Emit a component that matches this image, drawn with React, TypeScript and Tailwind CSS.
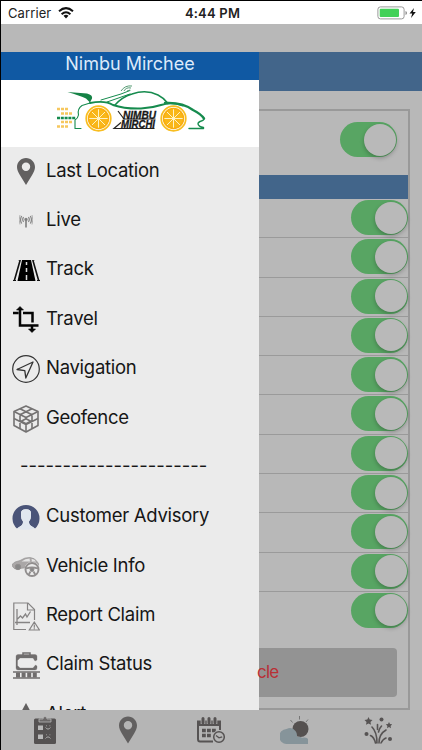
import React from "react";

type IconProps = { className?: string };

const PinIcon: React.FC<IconProps> = ({ className }) => (
	<svg viewBox="0 0 18 27" className={className} fill="#626060">
		<path
			fillRule="evenodd"
			d="M9 0C4 0 0 4 0 9c0 3 1.200 5 3 8.200L9 27l6-9.800c1.800-3.200 3-5.200 3-8.200 0-5-4-9-9-9Zm0 4.500a4.200 4.200 0 1 1 0 8.400 4.200 4.200 0 0 1 0-8.400Z"
		/>
	</svg>
);

const LiveIcon = () => (
	<svg viewBox="0 0 14 13" className="w-[14px] h-[13px]" fill="none" stroke="#858585" strokeWidth="1.2">
		<path d="M4.600 2.200q-1.800 2.300 0 4.600M9.400 2.200q1.800 2.300 0 4.600M2.700 1q-2.300 4 0 7.500M11.300 1q2.300 4 0 7.500" />
		<path d="M1 0q-1.600 5 0 9.500M13 0q1.600 5 0 9.500" strokeWidth=".6" />
		<circle cx="7" cy="4.500" r="1.100" fill="#777" />
		<path d="M7 5v7.500" strokeWidth="1.700" />
	</svg>
);

const RoadIcon = () => (
	<svg viewBox="0 0 27 21" className="w-[27px] h-[21px]">
		<path d="M9 0h9l4.500 21h-18Z" fill="#000" />
		<path d="M7.200 0 1.200 21M19.800 0l6 21" stroke="#111" strokeWidth="1.600" />
		<path d="M5.500 0h2M19.500 0h2M0 20.500h3M24 20.500h3" stroke="#111" />
		<path d="M13.500 2v3M13.500 8v4M13.500 15v5" stroke="#ddd" strokeWidth="1.500" />
	</svg>
);

const TravelIcon = () => (
	<svg viewBox="0 0 26 27" className="w-[26px] h-[27px]" fill="none" stroke="#050505" strokeWidth="2.500">
		<path d="M7 3v16.500h18.500M0 7h5.500M10 7h9.500v9.500M19 20v4" />
		<path d="m3.500 4 3.500-3.500L10.500 4ZM15.500 23l3.500 3.500 3.500-3.500Z" fill="#050505" strokeWidth=".6" />
	</svg>
);

const NavigationIcon = () => (
	<svg viewBox="0 0 28 28" className="w-[28px] h-[28px]" fill="none" stroke="#333">
		<circle cx="14" cy="14" r="13.300" strokeWidth="1.200" />
		<path d="M21 7 5 14.500l7.800 1.200 1 7.300Z" strokeWidth="1.300" strokeLinejoin="round" />
	</svg>
);

const CubeIcon = () => (
	<svg viewBox="0 0 26 28" className="w-[26px] h-[28px]" fill="none" stroke="#747272" strokeWidth="1.600" strokeLinejoin="round">
		<path d="m13 1 12 5.500v14L13 27 1 20.500v-14Z" />
		<path d="m1 6.500 12 6 12-6M13 12.500V27M1 13.500l12 6 12-6M7 3.800l12 6v14M19 3.800l-12 6v14" />
		<path d="m13 13.800 4.800 2.400-4.800 2.600-4.800-2.600Z" fill="#ebebeb" />
	</svg>
);

const PersonIcon = () => (
	<svg viewBox="0 0 28 26" className="w-[28px] h-[26px]">
		<path
			d="M5 24.500A13.500 13.500 0 1 1 23 24.500Q21 23 18.500 21.500Q16.800 20.500 17 17.500Q19 15 19 12V9Q19 5.200 14 5.200Q9 5.200 9 9v3q0 3 2 5.500.200 3-1.500 4Q7 23 5 24.500Z"
			fill="#4a5478"
		/>
		<path
			d="M5 24.500Q7 23 9.500 21.500q1.700-1 1.500-4Q9 15 9 12V9q0-3.800 5-3.800T19 9v3q0 3-2 5.500-.200 3 1.500 4Q21 23 23 24.500 14 27 5 24.500Z"
			fill="#e1e7ef"
		/>
	</svg>
);

const VehicleIcon = () => (
	<svg viewBox="0 0 28 20" className="w-[28px] h-[20px]" fill="none" stroke="#918e8e">
		<path d="M0 7.500 3 5 8 3.500Q13 0 18 .5q5 .5 7 4l1.500 2V9L12 11 3 12Q0 10 0 7.500Z" fill="#aaa7a7" strokeWidth=".6" />
		<path d="M9.500 4.500q4-3 8-3l.5 3ZM19.500 1.800q3.500.7 4.500 2.700h-4Z" fill="#e5e5e5" stroke="none" />
		<circle cx="6" cy="10" r="2.700" fill="#888" />
		<circle cx="20" cy="12.500" r="7.700" fill="#ebebeb" stroke="none" />
		<circle cx="20" cy="12.500" r="6.500" strokeWidth="1.900" />
		<circle cx="20" cy="12.500" r="1.900" fill="#888" />
		<path d="M14 11.500q6-2 12 0M18.500 14.500 16.500 18M21.500 14.500l2 3.500" strokeWidth="1.800" />
	</svg>
);

const ReportIcon = () => (
	<svg viewBox="0 0 27 29" className="w-[27px] h-[29px]" fill="none" stroke="#858383" strokeWidth="1.200">
		<path d="M13 27.500H.8V1H15l6.500 6.500V18" />
		<path d="M14.500 1v7h7" />
		<path d="M4 7v16M2 20.500h15M4.500 17l3-3 2 2 3-4 1.500 3 3.500-5.500" strokeWidth="1.300" />
		<path d="m21.300 20-5 8H26.400ZM21.300 22.500v3.200M21.300 26.300v1" />
	</svg>
);

const StatusIcon = () => (
	<svg viewBox="0 0 27 27" className="w-[27px] h-[27px]" fill="none" stroke="#706d6d">
		<path d="M10 3V1h7v2" strokeWidth="1.500" />
		<path
			fillRule="evenodd"
			d="M5 2.500h17q2 0 2 2V8l-2 1-2-3H7L4.500 8.500v5L7 16h13l2.500-3 1.500 1v2q0 2-2 2H5q-2 0-2-2V4.500q0-2 2-2Z"
			fill="#706d6d"
			strokeWidth=".3"
		/>
		<path d="M0 20h27M0 26h27" strokeWidth="1.400" />
		<path d="M3 23h21" strokeWidth="5" strokeDasharray="4 1.600" />
	</svg>
);

const AlertIcon = () => (
	<svg viewBox="0 0 26 24" className="w-[26px] h-[24px]" fill="#626060">
		<path d="M13 0 26 24H0Z" />
	</svg>
);

const ClipboardIcon = () => (
	<svg viewBox="0 0 22 28" className="w-[22px] h-[28px]">
		<rect y="2.500" width="22" height="25.500" rx="1.500" fill="#555252" />
		<path d="M5 6V3h4q0-2.500 2-2.500T13 3h4v3Z" fill="#6b6868" stroke="#b5b5b5" strokeWidth=".8" />
		<path d="M4 9.500h5v4.500H4ZM4 18.500h5V23H4Z" fill="#b8b8b8" />
		<path d="M11.500 11.500q2.500 3.200 5 0M11.500 22.500q2.500-3.200 5 0M12 9.800h.8M15.500 9.800h.8M12 18.800h.8M15.500 18.800h.8" fill="none" stroke="#aaa" />
	</svg>
);

const CalendarIcon = () => (
	<svg viewBox="0 0 28 27" className="w-[28px] h-[27px]" fill="none" stroke="#565353">
		<path d="M1 4v18q0 2.500 2 2.500h13M23 7v6" strokeWidth="2" />
		<path d="M0 3.500h24V9H0Z" fill="#565353" stroke="none" />
		<path d="M6 0v7M12 0v7M18 0v7" stroke="#b5b5b5" strokeWidth="4.600" />
		<path d="M6 1.500v4.500M12 1.500v4.500M18 1.500v4.500" strokeWidth="3" strokeLinecap="round" />
		<path d="M5 13.500h14M5 18.500h10" strokeWidth="3.400" strokeDasharray="3.800 1.200" />
		<circle cx="22" cy="20" r="6.800" fill="#b5b5b5" stroke="none" />
		<circle cx="22" cy="20" r="5.300" strokeWidth="1.500" />
		<path d="m19 18.500 3 2.300 3.200-1" strokeWidth="1.300" />
	</svg>
);

const WeatherIcon = () => (
	<svg viewBox="0 0 29 28" className="w-[29px] h-[28px]">
		<path d="M19.500 0v3.500M10.500 4l2 2.500M28 3.500l-2 2.500" stroke="#777" />
		<circle cx="20.500" cy="13" r="8" fill="#555150" />
		<path d="M7 28a7.500 7.500 0 0 1-.5-15Q12 10.500 15.500 15q2 2.500 1.500 6 3-1 5 .8 5-1 6 1.200V28Z" fill="#86949a" />
	</svg>
);

const FireworksIcon = () => (
	<svg viewBox="0 0 28 27" className="w-[28px] h-[27px]" fill="#565353">
		<path d="m4.500 0 1.200 2.500 2.800.4-2 2 .5 2.800-2.500-1.300L2 7.700l.5-2.800-2-2 2.800-.4ZM25 5l1 2 2.200.3-1.600 1.600.4 2.300-2-1.100-2 1.100.4-2.300-1.600-1.600L24 7Z" />
		<circle cx="17.500" cy="2.500" r="2" />
		<circle cx="2.500" cy="17" r="2" />
		<circle cx="26" cy="22" r="2" />
		<g fill="none" stroke="#565353" strokeWidth="1.600" strokeLinecap="round">
			<path d="M13 26q0-11-5-16M11.500 26Q10 20 6.500 18.500M15 26q0-9 7-13M17 26q2-4 5-5" />
			<path d="M13.500 7.500v5M14.500 15q1-4 3-6" />
		</g>
	</svg>
);

// one citrus slice, used for both wheels of the logo
const Wheel: React.FC<{ x: number }> = ({ x }) => (
	<g transform={`translate(${x} 33.500)`}>
		<circle r="12.300" fill="#fff" stroke="#f8bd20" strokeWidth="1.700" />
		<circle r="10.200" fill="#f9b719" />
		<path
			d="M0-9.500v19M-9.500 0h19M-6.700-6.700l13.400 13.400M6.700-6.700l-13.400 13.400"
			stroke="#fff3c4"
			strokeWidth="1"
		/>
		<circle r="10" fill="none" stroke="#f9ad0f" strokeWidth="1.500" />
		<circle r="1.800" fill="#fff3c4" />
	</g>
);

const Logo = () => (
	<svg viewBox="0 0 150 54" className="w-[150px] h-[54px]" fill="none">
		<g stroke="#168b4e" strokeLinecap="round" strokeLinejoin="round">
			<path d="M24 43.500h-6V35q3-2 3.500-5Q20 24 25 20.500L33 18" strokeWidth="1.100" />
			<path d="M33 18q15-3 23 2 12 4 28 3.500 11-.5 20-3.500 10-3.500 22 .5" strokeWidth="1.900" />
			<path d="M108 18q17-1 28 7 8 4 11 8.500" strokeWidth="2.400" />
			<path d="M147 33.500q0 2-4 3-3 1.500-1.500 3.500 1 2 5 2.500v1H132" strokeWidth="1.400" />
			<path d="M58 20q7-8 17-11 14-5 26 1 6 3 10 8.500" strokeWidth="1.500" />
			<path d="m44 15 20-6 9-3.500M50 17l23-8" strokeWidth="1" />
		</g>
		<path d="M10.500 7 30 8.500q6 1.500 5 5l-2 4-4-4q-6-3-18.500-6.500Z" fill="#158246" />
		<path d="M64 6Q68 0 75 1M67 6q2-4 7-3M70 6l3-1" stroke="#559b73" strokeWidth="1" />
		<path d="M0 24h12M4 28.500h12M4 37h12M0 41.500h12" stroke="#f6c75e" strokeWidth="2.500" strokeDasharray="3 1" />
		<path d="M0 33h19" stroke="#168b4e" strokeWidth="2.500" strokeDasharray="3 .8" />
		<Wheel x={41.500} />
		<Wheel x={116.500} />
		<path d="m61 26 6 8h31.500M64 37.500l-7 6h40.500" stroke="#252525" strokeWidth="1.200" />
		<g fill="#161616" stroke="#161616" strokeWidth=".3" fontFamily="Liberation Sans" fontStyle="italic" fontWeight="700" fontSize="10">
			<text x="66" y="33.500" textLength="33" lengthAdjust="spacingAndGlyphs">NIMBU</text>
			<text x="64" y="43" textLength="34" lengthAdjust="spacingAndGlyphs">MIRCHI</text>
		</g>
	</svg>
);

const menu = [
	{ label: "Last Location", icon: <PinIcon className="w-[18px] h-[27px]" /> },
	{ label: "Live", icon: <LiveIcon /> },
	{ label: "Track", icon: <RoadIcon /> },
	{ label: "Travel", icon: <TravelIcon /> },
	{ label: "Navigation", icon: <NavigationIcon /> },
	{ label: "Geofence", icon: <CubeIcon /> },
	{ label: "----------------------", icon: null },
	{ label: "Customer Advisory", icon: <PersonIcon /> },
	{ label: "Vehicle Info", icon: <VehicleIcon /> },
	{ label: "Report Claim", icon: <ReportIcon /> },
	{ label: "Claim Status", icon: <StatusIcon /> },
	{ label: "Alert", icon: <AlertIcon /> },
];

const tabs = [
	<ClipboardIcon />,
	<PinIcon className="w-[18px] h-[28px]" />,
	<CalendarIcon />,
	<WeatherIcon />,
	<FireworksIcon />,
];

const Toggle = () => (
	<div className="flex h-[35px] w-[57px] shrink-0 items-center justify-end rounded-full bg-[#58a563] pr-[1.5px]">
		<div className="h-[32px] w-[32px] rounded-full bg-[#b9b9b9] shadow-[0_2px_4px_rgba(0,0,0,0.25)]" />
	</div>
);

const StatusBar = () => (
	<div className="grid h-[23px] shrink-0 grid-cols-3 items-center bg-white pt-px text-[13px] leading-none text-[#222]">
		<div className="flex items-center gap-[7px] pl-[7px]">
			<span className="tracking-[0.1px]">Carrier</span>
			<svg viewBox="0 0 16 12" className="h-[12px] w-[16px]" fill="none" stroke="#111" strokeWidth="2">
				<path d="M1 4.300q7-6.300 14 0M3.600 7.200q4.400-4 8.800 0" />
				<path d="m5.500 8.800 2.500 2.700 2.500-2.700q-2.500-2-5 0Z" fill="#111" stroke="none" />
			</svg>
		</div>
		<span className="pl-[2px] text-center font-semibold tracking-[0.2px]">4:44 PM</span>
		<div className="flex items-center justify-end pr-[5px]">
			<svg viewBox="0 0 40 14" className="h-[14px] w-[40px]">
				<rect x=".9" y=".9" width="26.200" height="12" rx="2.500" fill="#fff" stroke="#999" />
				<rect x="2.700" y="2.700" width="19.300" height="8.400" rx="1" fill="#42d158" />
				<path d="M28.500 5v4q1.500-.5 1.500-2t-1.500-2Z" fill="#888" />
				<path d="m37 2-4.500 5.500h2.700L34 12l4.800-6H36Z" fill="#111" />
			</svg>
		</div>
	</div>
);

const Sidebar = () => (
	<aside className="flex w-[258px] shrink-0 flex-col overflow-hidden bg-[#ebebeb]">
		<h1 className="h-7 shrink-0 bg-[#1059a3] text-center text-[18px] leading-[23px] text-[#dceafa]">
			Nimbu Mirchee
		</h1>
		<div className="flex h-[67px] shrink-0 justify-center bg-white pt-[5px] pl-[4px]">
			<Logo />
		</div>
		<nav>
			{menu.map(({ label, icon }) => (
				<div key={label} className="flex h-[49.4px] items-center">
					{icon ? (
						<>
							<div className="ml-[10px] flex w-[30px] justify-center">{icon}</div>
							<span className="ml-[5px] pb-[2.5px] text-[18.5px] tracking-[-0.28px] whitespace-nowrap text-[#161616]">
								{label}
							</span>
						</>
					) : (
						<span className="ml-[19px] pb-1 text-[18.5px] whitespace-nowrap text-[#161616]">{label}</span>
					)}
				</div>
			))}
		</nav>
	</aside>
);

const Settings = () => (
	<main className="flex min-w-0 flex-1 flex-col">
		<div className="h-[39px] shrink-0 bg-[#42658a]" />
		<div className="mt-[18px] mr-[12px] flex h-[601px] flex-col border-y-2 border-r-2 border-[#999]">
			<div className="flex h-[64px] shrink-0 items-start justify-end pt-[11px] pr-[11px]">
				<Toggle />
			</div>
			<div className="h-6 shrink-0 bg-[#42658a]" />
			{Array.from({ length: 11 }).map((_, index) => (
				<div
					key={index}
					className="flex h-[39.3px] shrink-0 justify-end border-b-[1.5px] border-[#9a9a9a] pt-[1px] nth-[13]:border-transparent">
					<Toggle />
				</div>
			))}
			<button className="mt-[17px] mr-[11px] h-[49px] shrink-0 rounded-[4px] rounded-l-none bg-[#939393] text-left text-[17px] text-[#b93036]">
				<span className="-ml-[2px] tracking-[-0.8px]">cle</span>
			</button>
		</div>
	</main>
);

export default function App() {
	return (
		<div
			className="flex h-[750px] w-[422px] flex-col overflow-hidden border-t border-l border-black bg-[#b8b8b8]"
			style={{ fontFamily: "Inter, Roboto, sans-serif" }}>
			<StatusBar />
			<div className="mt-7 flex h-[658px] shrink-0">
				<Sidebar />
				<Settings />
			</div>
			<footer className="flex h-10 shrink-0 bg-[#b5b5b5] pl-[2px]">
				{tabs.map((icon, index) => (
					<div key={index} className="flex w-[83.3px] items-center justify-center">
						{icon}
					</div>
				))}
			</footer>
		</div>
	);
}
